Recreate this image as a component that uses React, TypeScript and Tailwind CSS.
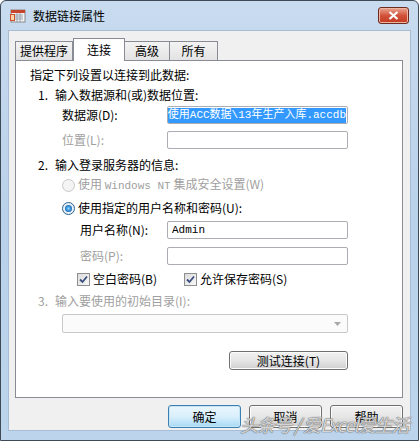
import React from 'react'

const font = '"Noto Sans CJK SC","Liberation Sans",sans-serif'
const mono = '"Liberation Mono","Noto Sans CJK SC",monospace'

const Input = ({ children }: { children?: React.ReactNode }) => (
  <div className="w-[181px] h-[18px] border border-[#abadb3] rounded-[2px] bg-white flex items-center overflow-hidden whitespace-nowrap">
    {children}
  </div>
)

const WinButton = ({ label, focused, w }: { label: string; focused?: boolean; w: string }) => (
  <div
    className={`${w} rounded-[3px] border flex items-center justify-center text-[12px] text-black ${
      focused
        ? 'border-[#3c7fb1] bg-linear-to-b from-[#eaf6fd] via-[#d9f0fc] to-[#a7d9f5] shadow-[inset_0_0_0_1px_#c6e5f7]'
        : 'border-[#707070] bg-linear-to-b from-[#f2f2f2] via-[#e6e6e6] to-[#cfcfcf] shadow-[inset_0_0_0_1px_#fcfcfc]'
    }`}
  >
    {label}
  </div>
)

const Check = () => (
  <div className="w-[13px] h-[13px] border border-[#8e8f8f] bg-linear-to-br from-[#dcdcdc] to-[#f8f8f8] flex items-center justify-center">
    <svg width="9" height="9" viewBox="0 0 9 9">
      <path d="M1 4.5 L3.5 7 L8 1.5" stroke="#3a4e7d" strokeWidth="1.8" fill="none" />
    </svg>
  </div>
)

const Radio = ({ checked }: { checked?: boolean }) => (
  <div className={`w-[13px] h-[13px] rounded-full border flex items-center justify-center ${checked ? 'border-[#2c628b] bg-[#e8f0f8]' : 'border-[#c8c8c8] bg-[#f4f4f4]'}`}>
    {checked && <div className="w-[7px] h-[7px] rounded-full bg-radial from-[#8fd2ff] via-[#2a8ad4] to-[#17437c]" />}
  </div>
)

export default function App() {
  return (
    <div className="w-[419px] h-[441px] overflow-hidden bg-white relative" style={{ fontFamily: font }}>
      <div className="w-[419px] h-[441px] border border-[#3f4a57] rounded-t-[6px] bg-linear-to-b from-[#c8dbef] via-[#b9d1ea] to-[#bcd4ec] flex flex-col">
        {/* title bar */}
        <div className="h-[29px] flex items-center pl-[9px] pr-[9px] shrink-0">
          <svg width="17" height="16" viewBox="0 0 17 16" className="mr-[6px]">
            <rect x="1" y="2" width="14" height="12" fill="#f4f4f4" stroke="#8a8a8a" />
            <rect x="1" y="2" width="14" height="3" fill="#c6452c" />
            <path d="M4 7h9M4 9h9M4 11h9M7 5v9M10 5v9" stroke="#9aa4b0" strokeWidth="1" />
            <rect x="0" y="6" width="5" height="7" fill="#d1502f" />
            <rect x="1" y="7" width="3" height="5" fill="#f9d2a8" />
          </svg>
          <span className="text-[12px] text-black">数据链接属性</span>
          <div className="ml-auto w-[31px] h-[17px] rounded-[3px] border border-[#6d2a20] bg-linear-to-b from-[#e8a593] via-[#d1533a] to-[#c23a20] flex items-center justify-center shadow-[inset_0_0_0_1px_#eeb4a4]">
            <svg width="11" height="9" viewBox="0 0 11 9">
              <path d="M1.5 1 L9.5 8 M9.5 1 L1.5 8" stroke="#ffffff" strokeWidth="2.2" />
            </svg>
          </div>
        </div>
        {/* client */}
        <div className="mx-[7px] h-[401px] bg-[#f0f0f0] border border-[#a8bcd3] flex flex-col px-[6px] pt-[6px] shrink-0">
          {/* tabs */}
          <div className="flex items-end h-[23px] text-[12px] relative z-10 whitespace-nowrap">
            <div className="h-[19px] w-[58px] border border-[#898c95] border-b-0 bg-linear-to-b from-[#f3f3f3] to-[#e3e3e3] flex items-center justify-center">提供程序</div>
            <div className="h-[23px] w-[52px] border border-[#898c95] border-b-0 bg-white flex items-start pt-[2px] justify-center -mb-px">连接</div>
            <div className="h-[19px] w-[45px] border border-[#898c95] border-b-0 border-l-0 bg-linear-to-b from-[#f3f3f3] to-[#e3e3e3] flex items-center justify-center">高级</div>
            <div className="h-[19px] w-[48px] border border-[#898c95] border-b-0 border-l-0 bg-linear-to-b from-[#f3f3f3] to-[#e3e3e3] flex items-center justify-center">所有</div>
          </div>
          {/* panel */}
          <div className="w-[388px] h-[338px] border border-[#898c95] bg-white flex flex-col pl-[14px] text-[12px] text-black whitespace-nowrap">
            <div className="mt-[4px] h-[20px] flex items-center">指定下列设置以连接到此数据:</div>
            <div className="h-[20px] flex items-center pl-[8px]">
              <span className="w-[17px]">1.</span>输入数据源和(或)数据位置:
            </div>
            <div className="mt-[1px] h-[18px] flex items-center pl-[32px]">
              <span className="w-[105px]">数据源(D):</span>
              <Input>
                <div className="w-full flex justify-end pr-[1px]">
                  <span className="bg-[#3399ff] text-white h-[15px] leading-[15px] shrink-0 text-[11px]" style={{ fontFamily: mono }}>
                    使用ACC数据\13年生产入库.accdb
                  </span>
                </div>
              </Input>
            </div>
            <div className="mt-[7px] h-[18px] flex items-center pl-[32px] text-[#a0a0a0]">
              <span className="w-[105px]">位置(L):</span>
              <Input />
            </div>
            <div className="mt-[6px] h-[20px] flex items-center pl-[8px]">
              <span className="w-[17px]">2.</span>输入登录服务器的信息:
            </div>
            <div className="h-[20px] flex items-center pl-[32px] text-[#a0a0a0]">
              <Radio />
              <span className="ml-[3px]">
                使用 <span className="text-[11px]" style={{ fontFamily: mono }}>Windows NT</span> 集成安全设置(W)
              </span>
            </div>
            <div className="mt-[3px] h-[20px] flex items-center pl-[32px]">
              <Radio checked />
              <span className="ml-[3px]">使用指定的用户名称和密码(U):</span>
            </div>
            <div className="mt-[3px] h-[18px] flex items-center pl-[50px]">
              <span className="w-[87px]">用户名称(N):</span>
              <Input>
                <span className="pl-[4px] text-[11px]" style={{ fontFamily: mono }}>Admin</span>
              </Input>
            </div>
            <div className="mt-[8px] h-[18px] flex items-center pl-[50px] text-[#a0a0a0]">
              <span className="w-[87px]">密码(P):</span>
              <Input />
            </div>
            <div className="mt-[4px] h-[20px] flex items-center pl-[47px]">
              <Check />
              <span className="ml-[3px] w-[91px]">空白密码(B)</span>
              <Check />
              <span className="ml-[3px]">允许保存密码(S)</span>
            </div>
            <div className="mt-[2px] h-[20px] flex items-center pl-[8px] text-[#a0a0a0]">
              <span className="w-[17px]">3.</span>输入要使用的初始目录(I):
            </div>
            <div className="mt-[3px] h-[19px] ml-[32px] w-[286px] border border-[#c9c9c9] rounded-[2px] bg-[#fbfbfb] flex items-center justify-end pr-[6px]">
              <svg width="7" height="4" viewBox="0 0 7 4">
                <path d="M0 0 L7 0 L3.5 4 Z" fill="#a8a8a8" />
              </svg>
            </div>
            <div className="mt-[18px] ml-[199px]">
              <WinButton label="测试连接(T)" w="w-[119px] h-[19px]" />
            </div>
          </div>
          {/* buttons */}
          <div className="mt-[7px] flex justify-end gap-[8px] pr-[1px]">
            <WinButton label="确定" focused w="w-[73px] h-[23px]" />
            <WinButton label="取消" w="w-[73px] h-[23px]" />
            <WinButton label="帮助" w="w-[73px] h-[23px]" />
          </div>
        </div>
      </div>
      {/* watermark */}
      <div
        className="absolute left-[240px] top-[411px] text-[18px] italic text-white/75 whitespace-nowrap tracking-[-1px]"
        style={{ textShadow: '0 0 1px #555, 0 0 1px #555' }}
      >
        头条号 / 爱Excel爱生活
      </div>
    </div>
  )
}
